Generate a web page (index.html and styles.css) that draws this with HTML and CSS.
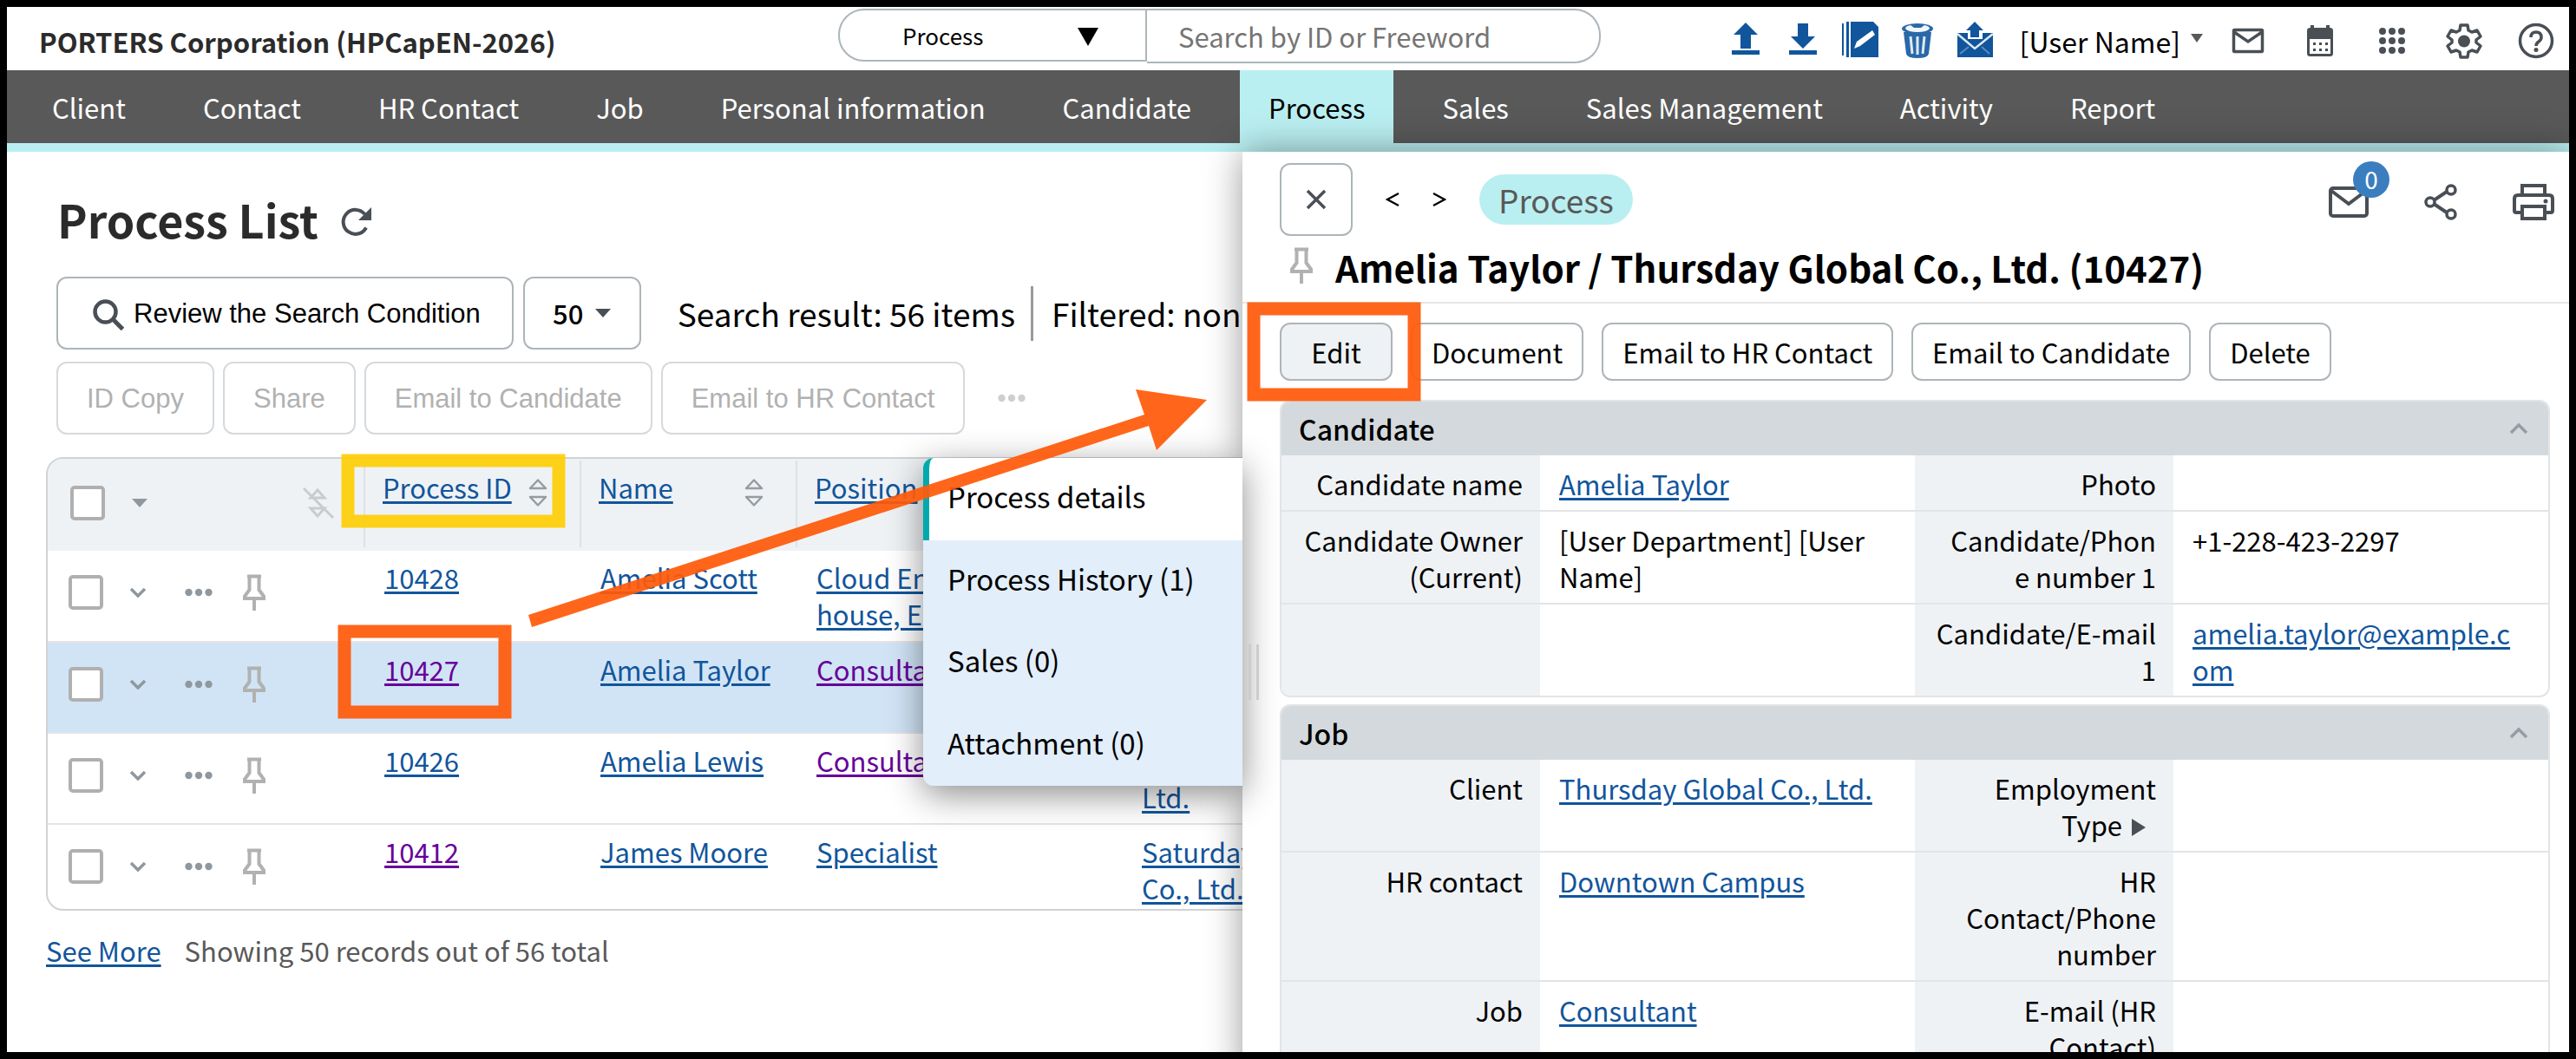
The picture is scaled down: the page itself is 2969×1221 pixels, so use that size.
FILE: index.html
```html
<!DOCTYPE html>
<html lang="en">
<head>
<meta charset="utf-8">
<title>Process List</title>
<link rel="stylesheet" href="styles.css">
</head>
<body>
<svg class="sprite" aria-hidden="true">
  <symbol id="pin" viewBox="0 0 26 42"><path d="M5 2.500h16M7.500 3v15L2 25.500V28h22v-2.500L18.500 18V3M13 28v14" fill="none" stroke="#b1b1b1" stroke-width="4"/></symbol>
  <symbol id="dots" viewBox="0 0 32 10"><circle cx="4.500" cy="5" r="4.200"/><circle cx="16" cy="5" r="4.200"/><circle cx="27.500" cy="5" r="4.200"/></symbol>
  <symbol id="down" viewBox="0 0 20 12"><path d="M2 2l8 8 8-8" fill="none" stroke="#8f989e" stroke-width="3.500"/></symbol>
  <symbol id="sort" viewBox="0 0 22 34"><path d="M11 2.500L20 12H2zM11 31.500L2 22h18z" fill="none" stroke="#969ca1" stroke-width="2.500" stroke-linejoin="round"/></symbol>
  <symbol id="mail" viewBox="0 0 46 36"><rect x="2" y="2" width="42" height="32" rx="3" fill="none" stroke="#494f55" stroke-width="4"/><path d="M3 5l20 15L43 5" fill="none" stroke="#494f55" stroke-width="4"/></symbol>
  <symbol id="up" viewBox="0 0 22 14"><path d="M2 12l9-9 9 9" fill="none" stroke="#969ca1" stroke-width="3.500"/></symbol>
</svg>

<header class="topbar">
  <div class="brand">PORTERS Corporation (HPCapEN-2026)</div>
  <form class="search">
    <span class="scope"><select aria-label="Search scope"><option>Process</option></select><svg viewBox="0 0 24 21"><path d="M0 0h24L12 21z"/></svg></span>
    <input type="search" placeholder="Search by ID or Freeword" aria-label="Search by ID or Freeword">
  </form>
  <div class="tools">
    <div class="quick">
      <button aria-label="Import"><svg viewBox="0 0 44 44" fill="#11559c"><path d="M22 1L36 15H28V31H16V15H8zM6 33h32v5H6z"/></svg></button>
      <button aria-label="Export"><svg viewBox="0 0 44 44" fill="#11559c"><path d="M22 31L8 17H16V2H28V17H36zM6 33h32v5H6z"/></svg></button>
      <button aria-label="Notes"><svg viewBox="0 0 44 44" fill="#11559c"><path d="M1 2h2v37H1zM6 0h3v41H6zM11 0h26l6 6v35H11z"/><path d="M15 31l3-8 18-13 3 5-17 13z" fill="#fff"/></svg></button>
      <button aria-label="Trash"><svg viewBox="0 0 44 44"><path d="M6 12l3 25q1 5 13 5t13-5l3-25z" fill="#2a68a8"/><ellipse cx="22" cy="8" rx="18" ry="6" fill="#2a68a8"/><path d="M8 8q0-3 6-4l4 3h8l4-3q6 1 6 4-3 4-14 4T8 8z" fill="#f2f6fa"/><path d="M14 17l2 20M22 17v21M30 17l-2 20" stroke="#dfe9f3" stroke-width="3"/></svg></button>
      <button aria-label="Send mail"><svg viewBox="0 0 44 44" fill="#11559c"><path d="M2 13h12v7h17v-7h12v28H2z"/><path d="M22 0l10 10h-5v8H17v-8h-5z"/><path d="M2 14l20 17L43 14" fill="none" stroke="#dfe9f3" stroke-width="2.500"/><path d="M5 37l10-8M39 37l-9-8" fill="none" stroke="#5d8cbd" stroke-width="2"/></svg></button>
    </div>
    <button class="user">[User Name]<svg viewBox="0 0 14 10"><path d="M0 0h14L7 10z" fill="#595959"/></svg></button>
    <div class="apps">
      <button aria-label="Mail"><svg viewBox="0 0 44 44"><path d="M6.500 9.500h31q1 0 1 1v23q0 1-1 1h-31q-1 0-1-1v-23q0-1 1-1zM6 12l16 11 16-11" fill="none" stroke="#494f55" stroke-width="3.500"/></svg></button>
      <button aria-label="Calendar"><svg viewBox="0 0 44 44"><rect x="8.500" y="8.500" width="27" height="30" rx="2" fill="none" stroke="#494f55" stroke-width="3"/><path d="M8 8h28v12H8zM11 4h4v6h-4zM29 4h4v6h-4z" fill="#494f55"/><path d="M14 25.500h17M14 32.500h17" stroke="#494f55" stroke-width="3" stroke-dasharray="3 4"/></svg></button>
      <button aria-label="Apps"><svg viewBox="0 0 44 44" fill="#494f55"><circle cx="11" cy="11" r="4"/><circle cx="22" cy="11" r="4"/><circle cx="33" cy="11" r="4"/><circle cx="11" cy="22" r="4"/><circle cx="22" cy="22" r="4"/><circle cx="33" cy="22" r="4"/><circle cx="11" cy="33" r="4"/><circle cx="22" cy="33" r="4"/><circle cx="33" cy="33" r="4"/></svg></button>
      <button aria-label="Settings"><svg viewBox="0 0 44 44"><path d="M18 4h8l1 6 4 2 6-2 4 7-5 4v3l5 4-4 7-6-2-4 2-1 6h-8l-1-6-4-2-6 2-4-7 5-4v-3l-5-4 4-7 6 2 4-2z" fill="none" stroke="#494f55" stroke-width="3.500" stroke-linejoin="round"/><circle cx="22" cy="22.500" r="7" fill="#494f55"/></svg></button>
      <button aria-label="Help"><svg viewBox="0 0 44 44"><circle cx="22" cy="22" r="18.500" fill="none" stroke="#494f55" stroke-width="3.500"/><path d="M16 18q0-6 6-6t6 6q0 3-3 5t-3 5" fill="none" stroke="#494f55" stroke-width="3.500"/><circle cx="22" cy="32.500" r="2.500" fill="#494f55"/></svg></button>
    </div>
  </div>
</header>

<nav class="menu">
  <a href="#">Client</a><a href="#">Contact</a><a href="#">HR Contact</a><a href="#">Job</a><a href="#">Personal information</a><a href="#">Candidate</a><a href="#" class="current">Process</a><a href="#">Sales</a><a href="#">Sales Management</a><a href="#">Activity</a><a href="#">Report</a>
</nav>

<div class="workspace">
  <main class="list">
    <h1>Process List <svg viewBox="0 0 36 36"><path d="M30 24.500A14 14 0 1 1 28.500 9" fill="none" stroke="#494f55" stroke-width="4"/><path d="M36 1v15H21z" fill="#494f55"/></svg></h1>
    <div class="toolbar">
      <button class="btn plain"><svg class="lens" viewBox="0 0 36 36"><circle cx="14.500" cy="14.500" r="12" fill="none" stroke="#494f55" stroke-width="4.500"/><path d="M23 23l11.500 11.500" stroke="#494f55" stroke-width="5"/></svg>Review the Search Condition</button>
      <button class="btn count">50<svg class="caret" viewBox="0 0 18 10"><path d="M0 0h18L9 10z" fill="#494f55"/></svg></button>
      <p class="result"><span>Search result: 56 items</span><span class="filter">Filtered: none</span></p>
    </div>
    <div class="toolbar actions">
      <button class="btn plain" disabled>ID Copy</button>
      <button class="btn plain" disabled>Share</button>
      <button class="btn plain" disabled>Email to Candidate</button>
      <button class="btn plain" disabled>Email to HR Contact</button>
      <svg class="more" fill="#cfcfcf"><use href="#dots"/></svg>
    </div>

    <div class="sheet">
      <table>
        <colgroup><col class="c-tools"><col class="c-id"><col class="c-name"><col class="c-pos"><col class="c-client"></colgroup>
        <thead>
          <tr>
            <th><div class="rowtools"><input type="checkbox" aria-label="Select all"><svg class="caret" viewBox="0 0 18 10"><path d="M0 0h18L9 10z" fill="#8f989e"/></svg><svg class="unsort" viewBox="0 0 36 36"><path d="M17 3l8 9H9zM17 33l-8-9h16zM1 1l34 34" fill="none" stroke="#c9cbcd" stroke-width="3"/></svg></div></th>
            <th><div class="head"><a href="#">Process ID</a><svg><use href="#sort"/></svg></div></th>
            <th><div class="head"><a href="#">Name</a><svg><use href="#sort"/></svg></div></th>
            <th><div class="head"><a href="#">Position</a></div></th>
            <th></th>
          </tr>
        </thead>
        <tbody>
          <tr>
            <td><div class="rowtools"><input type="checkbox" aria-label="Select 10428"><svg class="down"><use href="#down"/></svg><svg class="dots"><use href="#dots"/></svg><svg class="pin"><use href="#pin"/></svg></div></td>
            <td><a href="#">10428</a></td><td><a href="#">Amelia Scott</a></td><td><a href="#">Cloud Engineer (In-house, Engineer)</a></td><td></td>
          </tr>
          <tr class="selected">
            <td><div class="rowtools"><input type="checkbox" aria-label="Select 10427"><svg class="down"><use href="#down"/></svg><svg class="dots"><use href="#dots"/></svg><svg class="pin"><use href="#pin"/></svg></div></td>
            <td><a href="#" class="seen">10427</a></td><td><a href="#">Amelia Taylor</a></td><td><a href="#" class="seen">Consultant</a></td><td></td>
          </tr>
          <tr>
            <td><div class="rowtools"><input type="checkbox" aria-label="Select 10426"><svg class="down"><use href="#down"/></svg><svg class="dots"><use href="#dots"/></svg><svg class="pin"><use href="#pin"/></svg></div></td>
            <td><a href="#">10426</a></td><td><a href="#">Amelia Lewis</a></td><td><a href="#" class="seen">Consultant</a></td><td><a href="#"><br>Ltd.</a></td>
          </tr>
          <tr>
            <td><div class="rowtools"><input type="checkbox" aria-label="Select 10412"><svg class="down"><use href="#down"/></svg><svg class="dots"><use href="#dots"/></svg><svg class="pin"><use href="#pin"/></svg></div></td>
            <td><a href="#" class="seen">10412</a></td><td><a href="#">James Moore</a></td><td><a href="#">Specialist</a></td><td><a href="#">Saturday<br>Co., Ltd.</a></td>
          </tr>
        </tbody>
      </table>
    </div>
    <p class="summary"><a href="#">See More</a><span>Showing 50 records out of 56 total</span></p>
  </main>

  <aside class="detail">
    <ul class="tabs">
      <li class="on">Process details</li>
      <li>Process History (1)</li>
      <li>Sales (0)</li>
      <li>Attachment (0)</li>
    </ul>
    <div class="panel">
      <div class="crumbs">
        <button class="btn close" aria-label="Close"><svg viewBox="0 0 24 24"><path d="M2 2l20 20M22 2L2 22" stroke="#494f55" stroke-width="3.500"/></svg></button>
        <button class="step" aria-label="Previous"><svg viewBox="0 0 16 16"><path d="M15 1L2 8l13 7" fill="none" stroke="#000" stroke-width="2.200"/></svg></button>
        <button class="step" aria-label="Next"><svg viewBox="0 0 16 16"><path d="M1 1l13 7-13 7" fill="none" stroke="#000" stroke-width="2.200"/></svg></button>
        <span class="chip">Process</span>
        <div class="share">
          <button aria-label="Mail"><svg class="i-mail"><use href="#mail"/></svg><span class="badge">0</span></button>
          <button aria-label="Share"><svg viewBox="0 0 38 42"><path d="M29 7L8 21l21 14" fill="none" stroke="#494f55" stroke-width="4"/><g fill="#fff" stroke="#494f55" stroke-width="3.500"><circle cx="31" cy="7" r="5"/><circle cx="7" cy="21" r="5"/><circle cx="31" cy="35" r="5"/></g></svg></button>
          <button aria-label="Print"><svg class="i-print" viewBox="0 0 48 42"><path d="M11 13V2h26v11M11 33H4q-2 0-2-2V17q0-4 4-4h36q4 0 4 4v14q0 2-2 2h-7" fill="none" stroke="#494f55" stroke-width="4"/><path d="M11 26h26v14H11z" fill="#fff" stroke="#494f55" stroke-width="4"/><circle cx="38" cy="20" r="2.500" fill="#494f55"/></svg></button>
        </div>
      </div>
      <h2><svg class="pin"><use href="#pin"/></svg>Amelia Taylor / Thursday Global Co., Ltd. (10427)</h2>
      <div class="commands">
        <button class="btn edit">Edit</button>
        <button class="btn">Document</button>
        <button class="btn">Email to HR Contact</button>
        <button class="btn">Email to Candidate</button>
        <button class="btn">Delete</button>
      </div>
      <section>
        <h3>Candidate<svg><use href="#up"/></svg></h3>
        <table>
          <tr><th>Candidate name</th><td><a href="#">Amelia Taylor</a></td><th>Photo</th><td></td></tr>
          <tr><th>Candidate Owner (Current)</th><td>[User Department] [User Name]</td><th>Candidate/Phon<br>e number 1</th><td>+1-228-423-2297</td></tr>
          <tr><th></th><td></td><th>Candidate/E-mail 1</th><td><a href="#">amelia.taylor@example.com</a></td></tr>
        </table>
      </section>
      <section>
        <h3>Job<svg><use href="#up"/></svg></h3>
        <table>
          <tr><th>Client</th><td><a href="#">Thursday Global Co., Ltd.</a></td><th>Employment Type <svg class="play" viewBox="0 0 28 20"><path d="M0 0l16 10-16 10z" fill="#494f55"/></svg></th><td></td></tr>
          <tr><th>HR contact</th><td><a href="#">Downtown Campus</a></td><th>HR Contact/Phone number</th><td></td></tr>
          <tr><th>Job</th><td><a href="#">Consultant</a></td><th>E-mail (HR Contact)</th><td></td></tr>
        </table>
      </section>
    </div>
    <div class="grip"></div>
  </aside>
</div>

<svg class="marks" viewBox="0 0 2953 1205" aria-hidden="true">
  <rect x="393" y="523" width="243" height="70" class="mark yellow"/>
  <rect x="389" y="720" width="185" height="93" class="mark orange"/>
  <rect x="1437" y="348" width="185" height="99" class="mark orange"/>
  <path d="M601 701L1311 470 1301 441 1383 453 1325 511 1316 483 605 715z" class="arrow"/>
</svg>
</body>
</html>
```
FILE: styles.css
```css
* { box-sizing: border-box; }
html, body { margin: 0; }
body {
  position: relative;
  display: flex;
  flex-direction: column;
  height: 100vh;
  overflow: hidden;
  border: 8px solid #000;
  background: #fff;
  color: #000;
  font: 31px/42px "Noto Sans CJK JP", sans-serif;
}
a { color: #11559c; text-underline-offset: 3px; text-decoration-thickness: 3px; }
a.seen { color: #609; }
button, input, select { font: inherit; color: inherit; }
button { padding: 0; border: 0; background: none; }
svg { display: block; flex: none; }
p, h1, h2, h3, ul { margin: 0; padding: 0; }
ul { list-style: none; }
.sprite { position: absolute; width: 0; height: 0; }

/* top bar */
.topbar {
  display: grid;
  grid-template-columns: 958fr 879px 1116fr;
  align-items: center;
  height: 73px;
  flex: none;
}
.brand { padding: 6px 0 0 37px; font-weight: 700; color: #2b2b2b; white-space: nowrap; }
.search { display: flex; align-self: start; margin-top: 2px; }
.scope {
  display: flex;
  align-items: center;
  width: 356px;
  height: 61px;
  padding-right: 54px;
  border: 2px solid #adb5ba;
  border-radius: 30px 0 0 30px;
}
.scope select {
  flex: 1;
  min-width: 0;
  padding: 0 0 0 72px;
  appearance: none;
  border: 0;
  background: none;
  font-size: 26px;
}
.scope svg { width: 24px; height: 21px; margin-top: 3px; }
.search input {
  flex: 1;
  min-width: 0;
  height: 63px;
  padding: 0 36px;
  border: 2px solid #adb5ba;
  border-left: 0;
  border-radius: 0 30px 30px 0;
  background: #fff;
}
.search input::placeholder { color: #757575; opacity: 1; }
.tools { display: flex; justify-content: flex-end; align-items: center; gap: 30px; padding: 4px 16px 0 0; }
.quick { display: flex; gap: 22px; }
.apps { display: flex; gap: 39px; }
.tools button { display: flex; }
.quick svg, .apps svg { width: 44px; height: 44px; }
.tools .user { gap: 12px; font-size: 32px; white-space: nowrap; }
.user svg { width: 14px; height: 10px; margin-top: 13px; }

/* main menu */
.menu {
  display: flex;
  gap: 1px;
  flex: none;
  height: 94px;
  padding-left: 8px;
  border-bottom: 10px solid #baeff1;
  background: #595959;
  white-space: nowrap;
}
.menu a { display: flex; align-items: center; margin: 0 11px; padding: 1px 33px 0; color: #fff; text-decoration: none; }
.menu .current { background: #baeff1; color: #000; }

.workspace { display: grid; grid-template-columns: 1424fr 1529fr; flex: 1; min-height: 0; }

/* list */
.list { min-width: 0; overflow: hidden; padding: 36px 0 0 45px; }
h1 { display: flex; align-items: center; gap: 25px; margin: 0 0 24px 13px; font-size: 52px; line-height: 84px; color: #2b2b2b; }
h1 svg { width: 36px; height: 36px; margin-top: 6px; }
.toolbar { display: flex; align-items: center; gap: 11px; margin: 0 0 14px 12px; white-space: nowrap; }
.actions { margin-bottom: 26px; }
.btn {
  display: flex;
  flex: none;
  align-items: center;
  justify-content: center;
  border: 2px solid #adb5ba;
  border-radius: 12px;
  background: #fff;
  white-space: nowrap;
}
.toolbar .btn { height: 84px; padding: 2px 36px 0; }
.plain { font-family: "Liberation Sans", Arial, sans-serif; }
.actions { gap: 10px; }
.toolbar .btn:disabled { padding: 2px 33px 0; border-color: #d5dade; color: #b1b1b1; }
.lens { width: 36px; height: 36px; margin: 2px 11px 0 4px; }
.toolbar .count { gap: 14px; width: 136px; padding: 0; font-weight: 500; }
.caret { width: 18px; height: 10px; }
.result { display: flex; flex: none; align-items: center; margin-left: 31px; font-size: 37px; line-height: 63px; }
.filter { margin-left: 18px; padding-left: 21px; border-left: 3px solid #999; }
.more { width: 32px; height: 10px; margin-left: 28px; }

.sheet { width: 1600px; border: 2px solid #d0d3d5; border-radius: 20px; overflow: hidden; }
.sheet table { width: 100%; table-layout: fixed; border-collapse: collapse; }
.c-tools { width: 364px; }
.c-id, .c-name { width: 249px; }
.c-pos { width: 375px; }
.sheet th { height: 106px; padding: 12px 0 0 22px; background: #eff2f5; font-weight: 400; text-align: left; vertical-align: top; }
.sheet th + th {
  background: linear-gradient(#dfe2e5, #dfe2e5) 0 2px / 2px 100px no-repeat #eff2f5;
}
.sheet tr { border-bottom: 2px solid #e3e4e5; }
.sheet tr:last-child { border-bottom: 0; }
.sheet td { height: 105px; padding: 10px 0 0 24px; vertical-align: top; }
.sheet tr:last-child td { height: 98px; }
.selected { background: #d1e4f5; }
.head { display: flex; justify-content: space-between; padding-right: 37px; }
.head svg { width: 22px; height: 34px; margin-top: 10px; }
.rowtools { display: grid; grid-template-columns: 40px 80px 60px 68px; justify-items: center; align-items: center; padding-top: 17px; }
.sheet th:first-child { padding: 14px 0 0 26px; }
.rowtools input {
  appearance: none;
  width: 40px;
  height: 40px;
  margin: 0;
  border: 4px solid #b0b0b0;
  border-radius: 5px;
  background: #fff;
}
.down { width: 20px; height: 12px; }
.dots { width: 32px; height: 10px; fill: #8f989e; }
.pin { width: 26px; height: 42px; }
.unsort { grid-column: 4; justify-self: end; width: 36px; height: 36px; margin-right: -56px; }
.summary { display: flex; gap: 27px; margin-top: 25px; color: #595959; }

/* detail */
.detail { position: relative; display: flex; flex-direction: column; min-width: 0; box-shadow: 0 0 40px rgba(0, 0, 0, .4); }
.panel { flex: 1; min-height: 0; overflow: hidden; padding: 13px 0 0 43px; background: #fff; }
.tabs {
  position: absolute;
  top: 353px;
  right: 100%;
  display: grid;
  grid-auto-rows: 1fr;
  width: 368px;
  height: 378px;
  border-radius: 12px 0 0 12px;
  background: #e2eefa;
  box-shadow: 0 10px 40px rgba(0, 0, 0, .45);
  font-size: 33px;
  white-space: nowrap;
}
.tabs li { padding: 23px 0 0 28px; }
.tabs .on { padding-left: 21px; border-left: 7px solid #00a9ad; border-radius: 12px 0 0 0; background: #fff; }
.grip { position: absolute; left: 7px; top: 568px; width: 12px; height: 64px; border: solid #ccc; border-width: 0 3px; }
.crumbs { display: flex; align-items: center; height: 84px; }
.close { width: 84px; height: 84px; }
.close svg { width: 24px; height: 24px; }
.step svg { width: 16px; height: 16px; }
.step { margin-left: 38px; }
.chip { margin-left: 38px; padding: 0 22px; border-radius: 29px; background: #baeff1; color: #595959; font-size: 37px; line-height: 58px; }
.share { display: flex; align-items: center; gap: 64px; margin: 6px 17px 0 auto; }
.share button { position: relative; display: flex; }
.share svg { width: 38px; height: 42px; }
.share .i-mail { width: 46px; height: 36px; }
.share .i-print { width: 48px; height: 42px; }
.badge {
  position: absolute;
  left: 28px;
  top: -29px;
  width: 42px;
  height: 42px;
  border-radius: 50%;
  background: #3b7ebf;
  color: #fff;
  font-size: 28px;
  line-height: 40px;
  text-align: center;
}
h2 { display: flex; gap: 26px; height: 78px; margin-left: -43px; padding: 6px 0 0 55px; border-bottom: 2px solid #e5e5e5; font-size: 42px; line-height: 60px; white-space: nowrap; }
h2 .pin { margin-top: 7px; }
.commands { display: flex; gap: 21px; padding: 22px 0; }
.commands .btn { height: 67px; padding: 0 22px; }
.commands .edit { width: 130px; background: #eef2f5; }
section { margin: 0 22px 8px 0; border: 2px solid #e3e4e5; border-radius: 12px; overflow: hidden; }
h3 { display: flex; align-items: center; justify-content: space-between; height: 62px; padding: 0 23px 0 20px; background: #d4d9dd; font-size: 32px; font-weight: 500; }
h3 svg { width: 22px; height: 14px; }
section table { width: 100%; table-layout: fixed; border-collapse: collapse; }
section tr + tr { border-top: 2px solid #e3e4e5; }
section th, section td { vertical-align: top; overflow-wrap: anywhere; }
section th { width: 298px; padding: 12px 20px 9px 23px; background: #eff2f5; font-weight: 400; text-align: right; }
section td { padding: 12px 34px 9px 22px; }
.play { display: inline-block; width: 28px; height: 20px; margin-left: 4px; }

/* annotations drawn over the screen */
.marks { position: absolute; left: 0; top: 0; width: 100%; height: 100%; pointer-events: none; opacity: .93; }
.mark { fill: none; stroke-width: 15; }
.yellow { stroke: #ffcf08; }
.orange { stroke: #ff5b0a; }
.arrow { fill: #ff5b0a; }
```
